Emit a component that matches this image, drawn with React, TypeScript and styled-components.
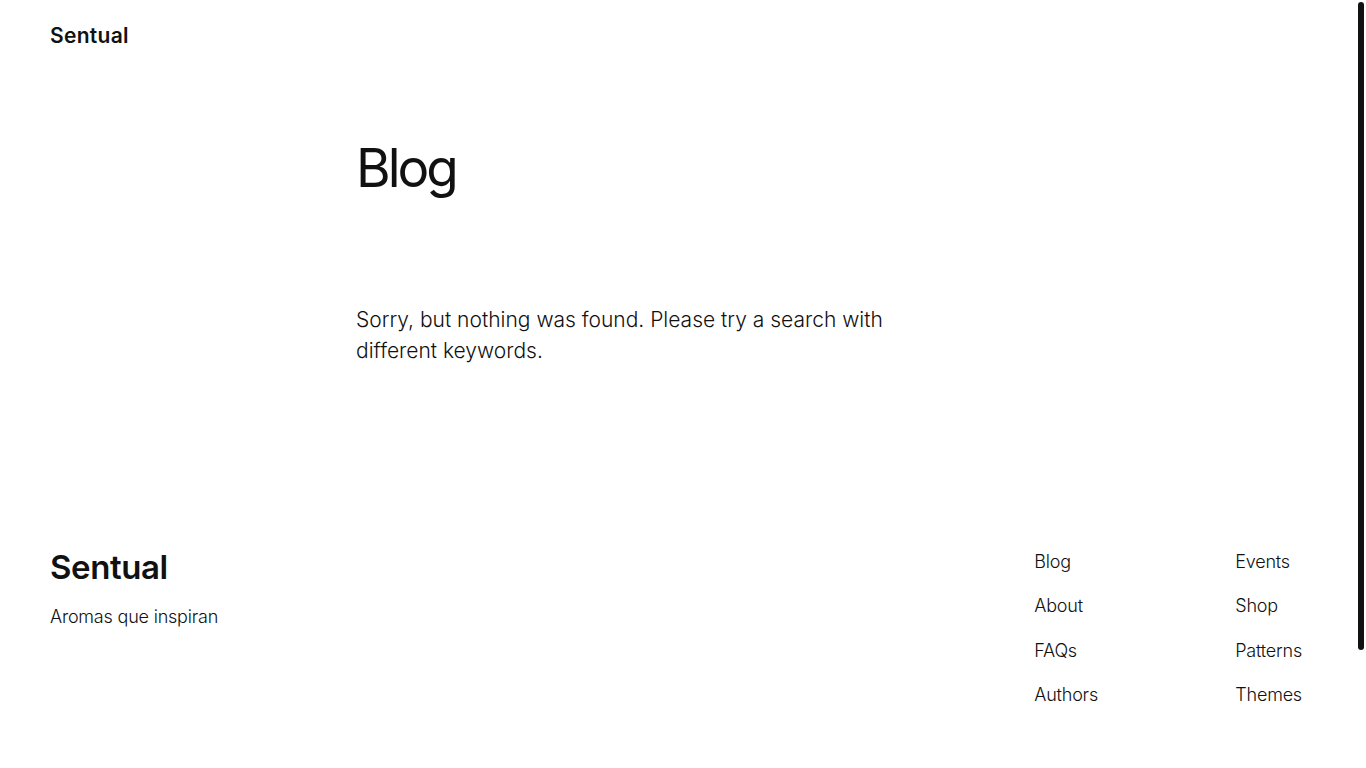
import React from "react";
import styled, { createGlobalStyle } from "styled-components";

const Global = createGlobalStyle`
  html, body { margin: 0; padding: 0; background: #fff; }
  body { font-family: "Inter", "Noto Sans", sans-serif; color: #111; -webkit-font-smoothing: antialiased; }
  ::-webkit-scrollbar { width: 0; height: 0; }
  a { color: inherit; text-decoration: none; }
`;

const Page = styled.div`
  display: flex;
  flex-direction: column;
  min-height: 908px;
`;

const ScrollThumb = styled.div`
  position: fixed;
  top: 2px;
  right: 2px;
  width: 6px;
  height: 648px;
  border-radius: 3px;
  background: #111;
`;

const Header = styled.header`
  display: flex;
  align-items: center;
  padding: 22px 50px 0;
  height: 26px;
`;

const SiteTitle = styled.a`
  font-size: 21px;
  font-weight: 600;
  letter-spacing: 0.3px;
`;

const Main = styled.main`
  display: flex;
  flex-direction: column;
  padding: 0 0 0 356px;
  flex: 1;
`;

const Title = styled.h1`
  margin: 94px 0 0;
  font-size: 53px;
  font-weight: 400;
  line-height: 1;
  letter-spacing: -3px;
`;

const Message = styled.p`
  margin: 109px 0 0;
  width: 545px;
  font-size: 21px;
  line-height: 31px;
  font-weight: 300;
  letter-spacing: 0;
`;

const Footer = styled.footer`
  display: flex;
  justify-content: space-between;
  padding: 0 64px 200px 50px;
`;

const Brand = styled.div`
  display: flex;
  flex-direction: column;
`;

const FooterTitle = styled.a`
  font-size: 33px;
  font-weight: 600;
  line-height: 40px;
  letter-spacing: -0.4px;
`;

const Tagline = styled.p`
  margin: 17px 0 0;
  font-size: 18px;
  line-height: 26px;
  font-weight: 300;
  letter-spacing: -0.2px;
`;

const Columns = styled.nav`
  display: grid;
  grid-template-columns: 201px auto;
  margin-top: 2px;
`;

const LinkList = styled.ul`
  list-style: none;
  margin: 0;
  padding: 0;
  display: flex;
  flex-direction: column;
  gap: 18.5px;
`;

const LinkItem = styled.li`
  font-size: 18px;
  line-height: 26px;
  font-weight: 300;
  letter-spacing: -0.2px;
`;

const col1 = ["Blog", "About", "FAQs", "Authors"];
const col2 = ["Events", "Shop", "Patterns", "Themes"];

export default function App() {
  return (
    <>
      <Global />
      <ScrollThumb aria-hidden="true" />
      <Page>
        <Header>
          <SiteTitle href="#">Sentual</SiteTitle>
        </Header>
        <Main>
          <Title>Blog</Title>
          <Message>Sorry, but nothing was found. Please try a search with different keywords.</Message>
        </Main>
        <Footer>
          <Brand>
            <FooterTitle href="#">Sentual</FooterTitle>
            <Tagline>Aromas que inspiran</Tagline>
          </Brand>
          <Columns>
            <LinkList>
              {col1.map((l) => (
                <LinkItem key={l}><a href="#">{l}</a></LinkItem>
              ))}
            </LinkList>
            <LinkList>
              {col2.map((l) => (
                <LinkItem key={l}><a href="#">{l}</a></LinkItem>
              ))}
            </LinkList>
          </Columns>
        </Footer>
      </Page>
    </>
  );
}
